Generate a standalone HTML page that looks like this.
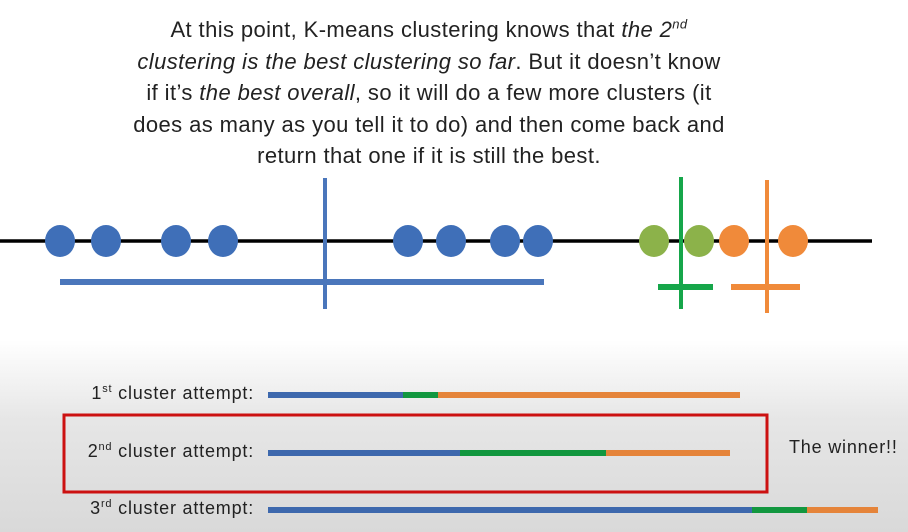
<!DOCTYPE html>
<html><head><meta charset="utf-8">
<style>
html,body{margin:0;padding:0;}
body{width:908px;height:532px;overflow:hidden;position:relative;
background:linear-gradient(to bottom,#fff 0px,#fff 340px,#e6e6e6 420px,#d9d9d9 532px);
font-family:"Liberation Sans",sans-serif;color:#222;}
.top{position:absolute;left:79px;width:700px;top:14px;text-align:center;font-size:22px;letter-spacing:0.4px;line-height:31.5px;color:#222;}
.top sup{font-size:13px;line-height:0;}
svg{position:absolute;left:0;top:0;}
.lbl{position:absolute;font-size:18px;letter-spacing:0.8px;color:#222;right:654px;white-space:nowrap;}
.lbl sup{font-size:11px;line-height:0;}
</style></head><body>
<div class="top">At this point, K-means clustering knows that <i>the 2<sup>nd</sup><br>clustering is the best clustering so far</i>. But it doesn’t know<br>if it’s <i>the best overall</i>, so it will do a few more clusters (it<br>does as many as you tell it to do) and then come back and<br>return that one if it is still the best.</div>
<svg width="908" height="532">
<line x1="0" y1="241" x2="872" y2="241" stroke="#000" stroke-width="3.5"/>
<g fill="#3f6fb8">
<ellipse cx="60" cy="241" rx="15" ry="16"/><ellipse cx="106" cy="241" rx="15" ry="16"/>
<ellipse cx="176" cy="241" rx="15" ry="16"/><ellipse cx="223" cy="241" rx="15" ry="16"/>
<ellipse cx="408" cy="241" rx="15" ry="16"/><ellipse cx="451" cy="241" rx="15" ry="16"/>
<ellipse cx="505" cy="241" rx="15" ry="16"/><ellipse cx="538" cy="241" rx="15" ry="16"/>
</g>
<g fill="#8cb24a"><ellipse cx="654" cy="241" rx="15" ry="16"/><ellipse cx="699" cy="241" rx="15" ry="16"/></g>
<g fill="#f08a3a"><ellipse cx="734" cy="241" rx="15" ry="16"/><ellipse cx="793" cy="241" rx="15" ry="16"/></g>
<line x1="325" y1="178" x2="325" y2="309" stroke="#4a76bb" stroke-width="4"/>
<line x1="60" y1="282" x2="544" y2="282" stroke="#4a76bb" stroke-width="6"/>
<line x1="681" y1="177" x2="681" y2="309" stroke="#16a64a" stroke-width="4"/>
<line x1="658" y1="287" x2="713" y2="287" stroke="#16a64a" stroke-width="6"/>
<line x1="767" y1="180" x2="767" y2="313" stroke="#f08a3a" stroke-width="4"/>
<line x1="731" y1="287" x2="800" y2="287" stroke="#f08a3a" stroke-width="6"/>
<g stroke-width="6">
<line x1="268" y1="395" x2="403" y2="395" stroke="#3d68ad"/>
<line x1="403" y1="395" x2="438" y2="395" stroke="#12973f"/>
<line x1="438" y1="395" x2="740" y2="395" stroke="#e5843a"/>
<line x1="268" y1="453" x2="460" y2="453" stroke="#3d68ad"/>
<line x1="460" y1="453" x2="606" y2="453" stroke="#12973f"/>
<line x1="606" y1="453" x2="730" y2="453" stroke="#e5843a"/>
<line x1="268" y1="510" x2="752" y2="510" stroke="#3d68ad"/>
<line x1="752" y1="510" x2="807" y2="510" stroke="#12973f"/>
<line x1="807" y1="510" x2="878" y2="510" stroke="#e5843a"/>
</g>
<rect x="64" y="415" width="703" height="77" fill="none" stroke="#cc1111" stroke-width="3"/>
</svg>
<div class="lbl" style="top:383px">1<sup>st</sup> cluster attempt:</div>
<div class="lbl" style="top:441px">2<sup>nd</sup> cluster attempt:</div>
<div class="lbl" style="top:498px">3<sup>rd</sup> cluster attempt:</div>
<div style="position:absolute;left:789px;top:437px;font-size:18px;letter-spacing:0.8px;color:#222;">The winner!!</div>
</body></html>
